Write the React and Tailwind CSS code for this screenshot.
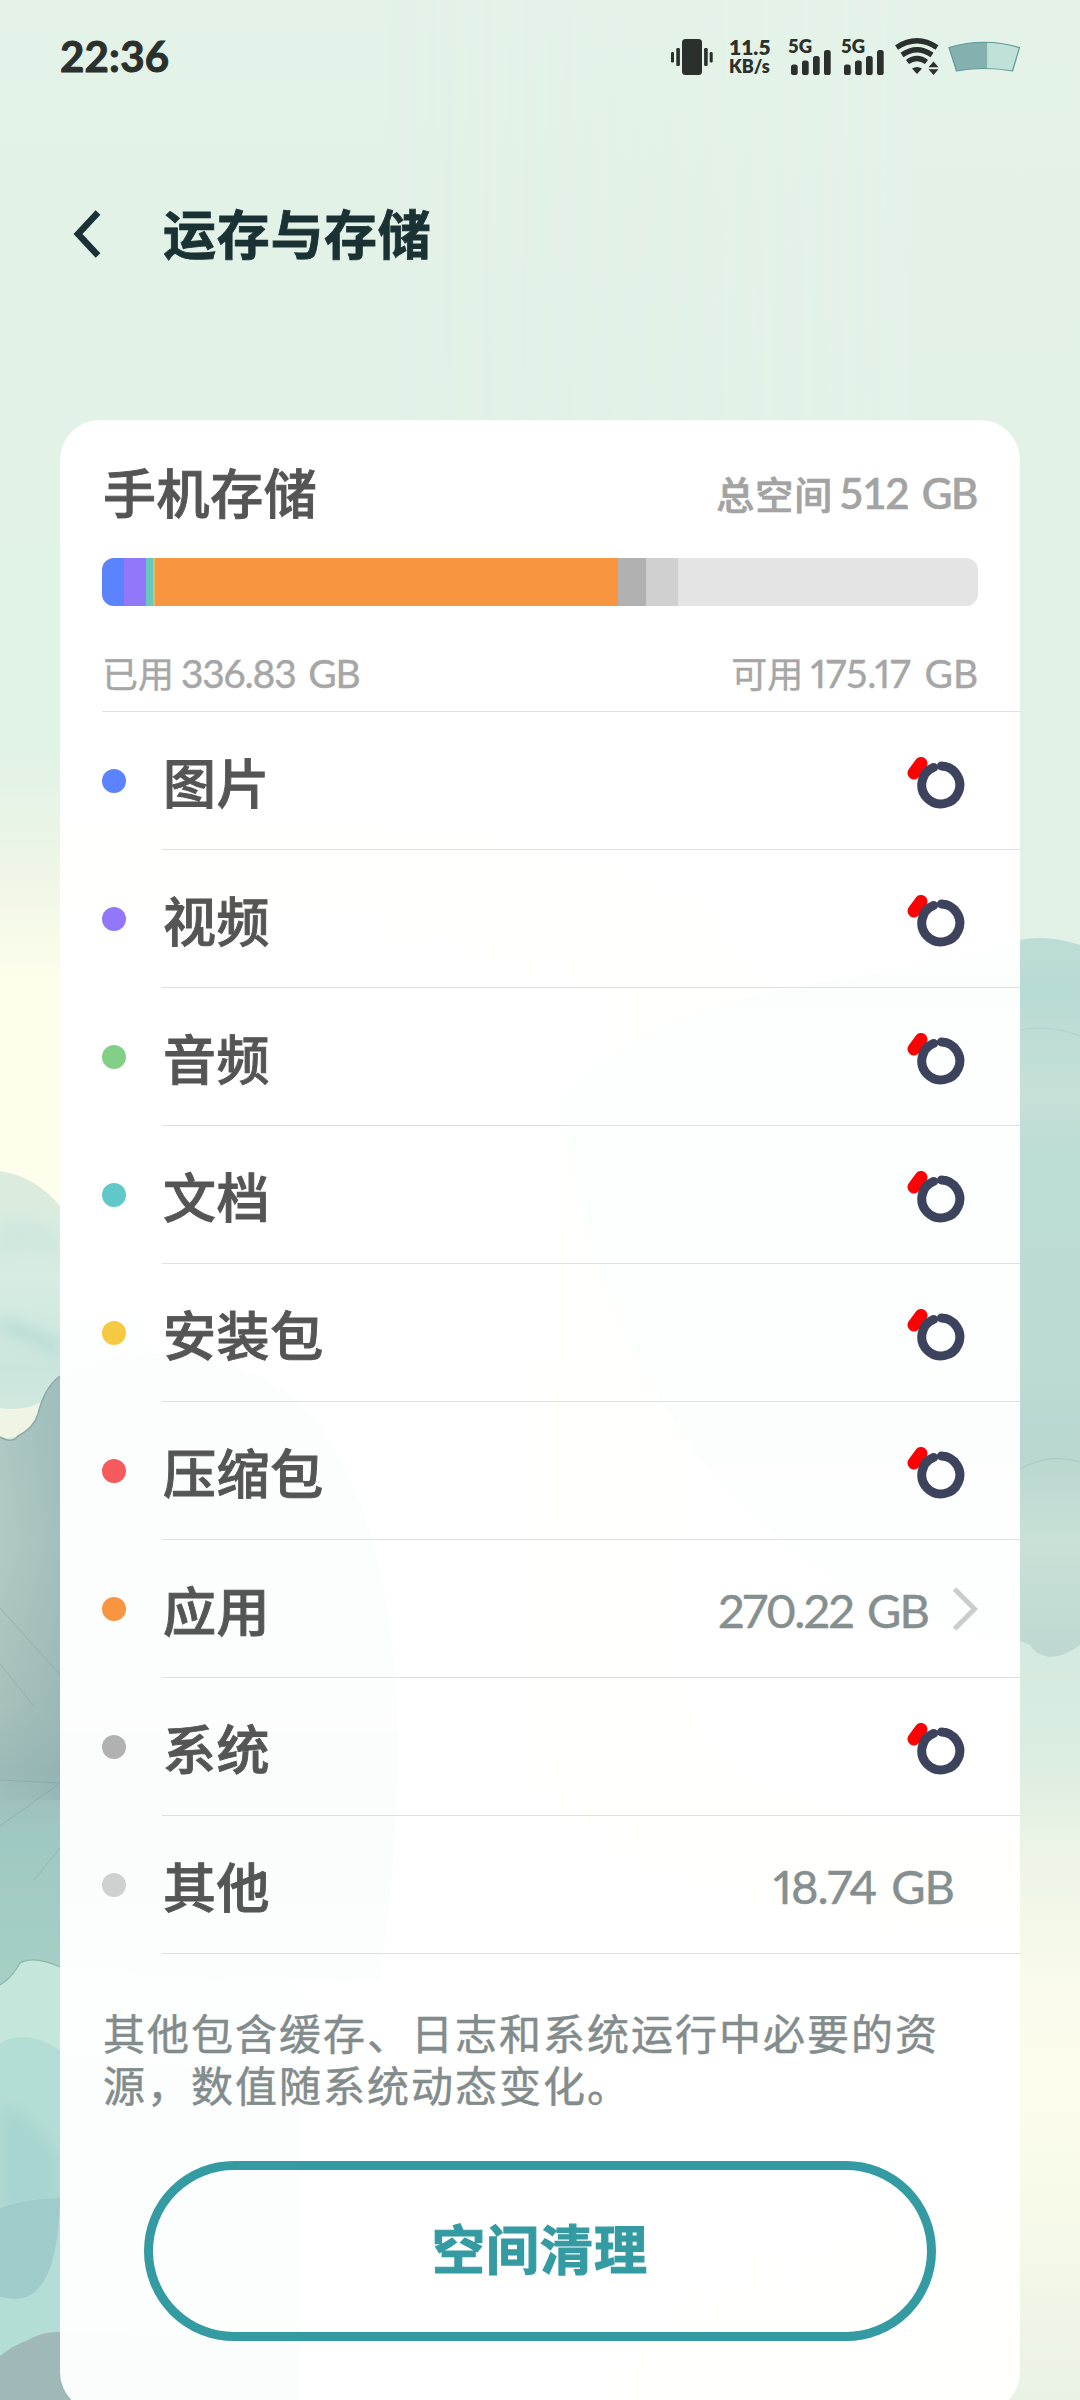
const rows = [
  { name: '图片', dot: 'bg-[#5b82ff]' },
  { name: '视频', dot: 'bg-[#9277fb]' },
  { name: '音频', dot: 'bg-[#82d088]' },
  { name: '文档', dot: 'bg-[#60c8c9]' },
  { name: '安装包', dot: 'bg-[#f6c943]' },
  { name: '压缩包', dot: 'bg-[#f65a5d]' },
  { name: '应用', dot: 'bg-[#f79540]', size: '270.22 GB', tracking: 'tracking-[-1.9px]', link: true },
  { name: '系统', dot: 'bg-[#b1b1b1]' },
  { name: '其他', dot: 'bg-[#d0d0d0]', size: '18.74 GB', tracking: 'tracking-[-1px]' },
];

const segments = [
  { color: 'bg-[#5b82ff]', width: 22 },
  { color: 'bg-[#9277fb]', width: 22 },
  { color: 'bg-[#66c9bb]', width: 7 },
  { color: 'bg-[#e5b95c]', width: 2 },
  { color: 'bg-[#f79540]', width: 463 },
  { color: 'bg-[#b1b1b1]', width: 28 },
  { color: 'bg-[#d0d0d0]', width: 32 },
];

function Wallpaper() {
  return (
    <svg className="absolute inset-0 h-full w-full" viewBox="0 0 1080 2400" preserveAspectRatio="none">
      <defs>
        <linearGradient id="skyLeft" x1="0" y1="0" x2="0" y2="1">
          <stop offset="0" stopColor="#e4f2e8" />
          <stop offset="0.31" stopColor="#e1f2e6" />
          <stop offset="0.355" stopColor="#ecf5e6" />
          <stop offset="0.41" stopColor="#fefeec" />
          <stop offset="1" stopColor="#fefeec" />
        </linearGradient>
        <linearGradient id="skyRight" x1="0" y1="0" x2="0" y2="1">
          <stop offset="0" stopColor="#e4f2e8" />
          <stop offset="0.38" stopColor="#e1f1e5" />
          <stop offset="0.69" stopColor="#d5eae0" />
          <stop offset="0.735" stopColor="#dcede1" />
          <stop offset="0.77" stopColor="#ecf4e5" />
          <stop offset="0.83" stopColor="#fafbec" />
          <stop offset="0.87" stopColor="#fcfcec" />
          <stop offset="0.92" stopColor="#f7fae9" />
          <stop offset="1" stopColor="#e9f2e4" />
        </linearGradient>
        <linearGradient id="leafRight" x1="0" y1="0" x2="0" y2="1">
          <stop offset="0" stopColor="#bddcd6" />
          <stop offset="0.08" stopColor="#b9dbd5" />
          <stop offset="0.22" stopColor="#c6e0d7" />
          <stop offset="0.3" stopColor="#bcdcd6" />
          <stop offset="0.6" stopColor="#bbdbd3" />
          <stop offset="0.72" stopColor="#b9d7d0" />
          <stop offset="0.84" stopColor="#c9e1d7" />
          <stop offset="1" stopColor="#bed8d1" />
        </linearGradient>
        <linearGradient id="leafPale" x1="0" y1="0" x2="0" y2="1">
          <stop offset="0" stopColor="#dcebdd" />
          <stop offset="0.35" stopColor="#d6ece2" />
          <stop offset="0.6" stopColor="#cbe5dd" />
          <stop offset="1" stopColor="#dceee0" />
        </linearGradient>
        <linearGradient id="leafDark" x1="0" y1="0" x2="0" y2="1">
          <stop offset="0" stopColor="#aac6c3" />
          <stop offset="0.3" stopColor="#b2cac4" />
          <stop offset="0.55" stopColor="#a8c1bc" />
          <stop offset="0.66" stopColor="#9cbab7" />
          <stop offset="0.76" stopColor="#a0c8c2" />
          <stop offset="1" stopColor="#a6cfc6" />
        </linearGradient>
        <linearGradient id="split" x1="0" y1="0" x2="1" y2="0">
          <stop offset="0.35" stopColor="#fff" stopOpacity="0" />
          <stop offset="0.85" stopColor="#fff" />
        </linearGradient>
        <mask id="rightSide">
          <rect width="1080" height="2400" fill="url(#split)" />
        </mask>
        <linearGradient id="shade" x1="0" y1="0" x2="1" y2="0">
          <stop offset="0" stopColor="#7fa5a8" stopOpacity="0" />
          <stop offset="1" stopColor="#7fa5a8" stopOpacity="0.28" />
        </linearGradient>
        <filter id="wash" x="-50%" y="-50%" width="200%" height="200%">
          <feGaussianBlur stdDeviation="7" />
        </filter>
      </defs>
      <rect width="1080" height="2400" fill="url(#skyLeft)" />
      <rect width="1080" height="2400" fill="url(#skyRight)" mask="url(#rightSide)" />
      <path d="M560 1100 C700 960 900 990 1020 940 Q1048 934 1080 945 V1645 Q1060 1660 1045 1656 Q1034 1653 1030 1645 L1020 1641 C850 1620 620 1500 560 1100Z" fill="url(#leafRight)" />
      <path d="M1020 1469 Q1050 1452 1080 1462" fill="none" stroke="#a9cbc6" strokeWidth="1.2" />
      <path d="M1020 1030 Q1050 1024 1080 1036" fill="none" stroke="#b0d3ce" strokeWidth="1.2" />
      <path d="M0 1171 Q35 1176 60 1206 Q160 1300 180 1500 H0Z" fill="url(#leafPale)" />
      <path d="M0 1222 Q25 1212 60 1232 V1262 Q30 1240 0 1262Z" fill="#c3e2dc" opacity="0.4" filter="url(#wash)" />
      <path d="M0 1318 Q30 1322 60 1342 V1360 Q30 1338 0 1334Z" fill="#a8d2cd" opacity="0.5" filter="url(#wash)" />
      <path d="M0 1408 Q30 1412 46 1398 L38 1420 L18 1436 L0 1440Z" fill="#eff4e4" />
      <path d="M0 1437 Q12 1444 18 1436 Q34 1428 38 1414 Q44 1388 60 1376 Q180 1320 300 1400 Q440 1560 380 1980 L0 1986Z" fill="url(#leafDark)" />
      <path d="M0 1437 Q12 1444 18 1436 Q34 1428 38 1414 Q44 1388 60 1376" fill="none" stroke="#8ba9a8" strokeWidth="1.5" />
      <path d="M0 1437 Q12 1444 18 1436 Q34 1428 38 1414 Q44 1388 60 1376 V1800 H0Z" fill="url(#shade)" />
      <path d="M0 1608 L60 1675 M0 1664 L34 1706 M0 1780 L60 1783 M0 1826 L60 1783 M34 1880 L60 1848" fill="none" stroke="#7d9c9d" strokeOpacity="0.45" strokeWidth="1" />
      <path d="M0 1985 Q12 1978 20 1963 Q34 1955 60 1967 L300 1990 V2400 H0Z" fill="#c5e6db" />
      <path d="M0 1985 Q12 1978 20 1963 Q34 1955 60 1967" fill="none" stroke="#8db3ad" strokeWidth="1.2" />
      <path d="M0 2043 Q26 2028 60 2050 L300 2080 V2400 H0Z" fill="#b4ddd5" />
      <path d="M0 2104 Q36 2112 60 2160 V2210 H0Z" fill="#a9d5d0" filter="url(#wash)" />
      <path d="M0 2208 Q30 2198 60 2198 Q58 2300 14 2299 L0 2297Z" fill="#9fcbcb" />
      <path d="M0 2356 Q12 2346 28 2340 Q44 2331 60 2332 L300 2340 V2400 H0Z" fill="#a0b9b8" />
    </svg>
  );
}

function StatusBar() {
  return (
    <div className="flex h-[114px] items-center pl-[60px] pr-[59px] text-[#2b302c]">
      <span className="-mt-[2px] text-[42px] font-bold leading-none tracking-[0.2px] [-webkit-text-stroke:1px_#2b302c]">22:36</span>
      <svg className="ml-auto mr-[16px]" width="42" height="36" viewBox="0 0 42 36" fill="#2b302c">
        <rect x="11" y="0" width="20" height="36" rx="3.5" />
        <rect x="5.3" y="9" width="3.6" height="18" rx="1.2" />
        <rect x="0" y="13" width="3" height="10.5" rx="1.2" />
        <rect x="33.1" y="9" width="3.6" height="18" rx="1.2" />
        <rect x="38.7" y="13" width="3" height="10.5" rx="1.2" />
      </svg>
      <div className="-mt-[2px] mr-[16px] flex w-[44px] flex-col font-extrabold">
        <span className="text-[21px] leading-[21px]">11.5</span>
        <span className="text-[18px] leading-[19px]">KB/s</span>
      </div>
      <Signal />
      <Signal />
      <svg className="mr-[9px]" width="44" height="38" viewBox="0 0 44 38" fill="none" stroke="#2b302c" strokeWidth="5.2">
        <path d="M1.5 9.5 Q22 -4 42 9.5" />
        <path d="M7 17 Q22 6.5 37 17" />
        <path d="M12.5 24 Q22 17 31.5 24" />
        <path d="M17 30.5 Q22 27.5 27 30.5 L22 36Z" fill="#2b302c" stroke="none" />
        <path d="M38.5 23.5 L43.5 29.2 H33.5Z M38.5 37 L43.5 31.3 H33.5Z" fill="#2b302c" stroke="none" />
      </svg>
      <svg width="73" height="32" viewBox="0 0 73 32">
        <path d="M1 6.5 Q19 1 39.5 1 V27.5 Q23 27.5 8.5 30Z" fill="#84b0b0" />
        <path d="M39.5 1 Q55 1 71.5 6.5 L64.5 30 Q52 27.5 39.5 27.5Z" fill="#bfe1d8" />
        <path d="M1 6.5 Q36 -4 71.5 6.5 L64.5 30 Q36 25 8.5 30Z" fill="none" stroke="#5f9896" strokeWidth="1.2" />
      </svg>
    </div>
  );
}

function Signal() {
  return (
    <div className="mr-[11px] flex h-[36px] w-[42px] flex-col">
      <span className="-ml-px h-[11px] text-[18.5px] font-extrabold leading-[15px]">5G</span>
      <svg className="ml-[2px] shrink-0" width="40" height="25" viewBox="0 0 40 25" fill="#2b302c">
        <rect x="0" y="14.5" width="6.7" height="10.5" rx="2.6" />
        <rect x="11" y="10.5" width="6.7" height="14.5" rx="2.6" />
        <rect x="22" y="6" width="6.7" height="19" rx="2.6" />
        <rect x="33" y="0" width="6.7" height="25" rx="2.6" />
      </svg>
    </div>
  );
}

function Spinner() {
  return (
    <svg className="-mt-[1px] mr-[13px]" width="58" height="54" viewBox="907 756 58 54" fill="none">
      <path d="M914 773 L921 763.5" stroke="#fb0203" strokeWidth="13" strokeLinecap="round" />
      <path d="M941.4 766 A19 19 0 1 1 933.6 767.4" stroke="#3d435d" strokeWidth="9" strokeLinecap="round" />
    </svg>
  );
}

function Amount({ label, value, tracking }) {
  return (
    <div className="flex items-center text-[#a6a6a6]">
      <span className="text-[36px] leading-none [-webkit-text-stroke:0.4px_#a6a6a6]">{label}</span>
      <span className={`-mt-px ml-[7px] text-[39px] leading-none proportional-nums [word-spacing:4px] [-webkit-text-stroke:0.4px_#a6a6a6] ${tracking}`}>
        {value}
      </span>
    </div>
  );
}

export default function App() {
  return (
    <div className="relative h-[2400px] w-[1080px] overflow-hidden bg-[#e4f2e8] font-[Lato,'Noto_Sans_CJK_SC',sans-serif]">
      <Wallpaper />
      <div className="relative flex flex-col">
        <StatusBar />
        <header className="mb-[66px] flex h-[240px] items-center pl-[73px]">
          <svg width="28" height="48" viewBox="0 0 28 48" fill="none" stroke="#1a3236" strokeWidth="6.5">
            <path d="M25 2.5 L5 24 L25 45.5" />
          </svg>
          <h1 className="ml-[62px] text-[53px] font-bold leading-none tracking-[0.7px] text-[#1b3234] [-webkit-text-stroke:0.8px_#1b3234]">
            运存与存储
          </h1>
        </header>
        <main className="mx-[60px] flex h-[1992px] flex-col rounded-[40px] bg-white/96">
          <div className="flex h-[138px] items-center justify-between pl-[43px] pr-[43px] pt-[9px]">
            <h2 className="text-[53px] font-medium leading-none tracking-[0.6px] text-[#555] [-webkit-text-stroke:0.9px_#555]">
              手机存储
            </h2>
            <div className="flex items-center font-medium text-[#a3a3a3]">
              <span className="text-[38px] leading-none tracking-[1px] [-webkit-text-stroke:0.7px_#a3a3a3]">总空间</span>
              <span className="-mt-[2px] ml-[6px] text-[42px] leading-none tracking-[-1.3px] [word-spacing:4px] [-webkit-text-stroke:0.7px_#a3a3a3]">
                512 GB
              </span>
            </div>
          </div>
          <div className="mx-[42px] flex h-[48px] overflow-hidden rounded-[12px] bg-[#e4e4e4]">
            {segments.map((s) => (
              <div key={s.color} className={s.color} style={{ width: s.width }} />
            ))}
          </div>
          <div className="ml-[42px] flex h-[106px] items-center justify-between border-b border-[#dfe2e2] pr-[42px] pt-[31px]">
            <Amount label="已用" value="336.83 GB" tracking="tracking-[-1.2px]" />
            <Amount label="可用" value="175.17 GB" tracking="tracking-[-0.1px]" />
          </div>
          <ul>
            {rows.map((r) => (
              <li key={r.name} className="flex h-[138px] pl-[42px]">
                <span className={`mr-[36px] mt-[57px] size-[24px] shrink-0 rounded-full ${r.dot}`} />
                <div className="flex flex-1 items-center justify-between border-b border-[#dde1e1] pl-px pr-[42px] pt-[6px]">
                  <span className="text-[53px] font-medium leading-none tracking-[0.6px] text-[#555] [-webkit-text-stroke:0.9px_#555]">
                    {r.name}
                  </span>
                  {r.size ? (
                    <div className="flex items-center">
                      <span className={`-mt-[2px] mr-[24px] text-[47px] leading-none text-[#858f8f] proportional-nums [word-spacing:4px] [-webkit-text-stroke:0.5px_#858f8f] ${r.tracking}`}>
                        {r.size}
                      </span>
                      {r.link && (
                        <svg className="-mt-[6px]" width="26" height="44" viewBox="0 0 26 44" fill="none" stroke="#cbcdcc" strokeWidth="5">
                          <path d="M2.5 2 L22.5 22 L2.5 42" />
                        </svg>
                      )}
                    </div>
                  ) : (
                    <Spinner />
                  )}
                </div>
              </li>
            ))}
          </ul>
          <p className="ml-[43px] mr-[41px] mt-[54px] text-[42px] leading-[52px] tracking-[2px] text-[#838c8c] [-webkit-text-stroke:0.5px_#838c8c]">
            其他包含缓存、日志和系统运行中必要的资源，数值随系统动态变化。
          </p>
          <button className="mx-[84px] mt-[49px] h-[180px] rounded-full border-[9px] border-[#359ba3] pb-[3px] text-[53px] font-bold leading-none tracking-[1px] text-[#359ba3] [-webkit-text-stroke:1.2px_#359ba3]">
            空间清理
          </button>
        </main>
      </div>
    </div>
  );
}
